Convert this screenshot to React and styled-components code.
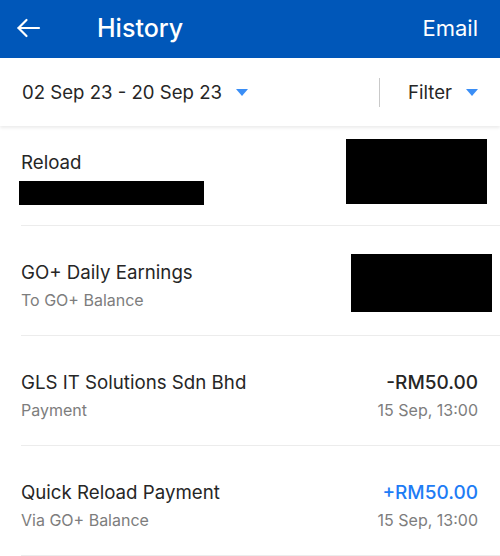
import React from "react";
import styled, { createGlobalStyle } from "styled-components";

const GlobalStyle = createGlobalStyle`
  body {
    margin: 0;
    background: #ffffff;
    font-family: Inter, "Noto Sans", sans-serif;
  }
  * {
    box-sizing: border-box;
  }
`;

const StyledPage = styled.div`
  width: 500px;
  height: 556px;
  overflow: hidden;
  background: #ffffff;
`;

const StyledHeader = styled.div`
  height: 58px;
  background: #0057b9;
  display: flex;
  align-items: center;
  padding: 0 22px 2px 14px;
  color: #ffffff;
`;

const StyledBack = styled.button`
  border: 0;
  background: transparent;
  padding: 0;
  width: 28px;
  height: 28px;
  display: flex;
  align-items: center;
  justify-content: center;
  color: #ffffff;
`;

const StyledTitle = styled.div`
  margin-left: 55px;
  font-size: 25px;
  font-weight: 500;
  flex: 1;
`;

const StyledEmail = styled.div`
  font-size: 22px;
  font-weight: 400;
`;

const StyledFilterBar = styled.div`
  height: 68px;
  display: flex;
  align-items: center;
  padding: 0 22px;
  box-shadow: 0 2px 3px rgba(0, 0, 0, 0.08);
  position: relative;
`;

const StyledDrop = styled.div`
  display: flex;
  align-items: center;
  gap: 14px;
  font-size: 18.6px;
  color: #262626;
  flex: ${(p) => (p.$grow ? 1 : "none")};
`;

const StyledCaret = styled.span`
  width: 0;
  height: 0;
  border-left: 6.5px solid transparent;
  border-right: 6.5px solid transparent;
  border-top: 7px solid #3a8ef6;
  margin-top: 1px;
`;

const StyledSep = styled.div`
  width: 1px;
  height: 29px;
  background: #c9c9c9;
  margin-right: 28px;
`;

const StyledList = styled.div`
  padding-left: 21px;
`;

const StyledRow = styled.div`
  height: ${(p) => (p.$first ? 100 : 110)}px;
  display: flex;
  align-items: ${(p) => (p.$first ? "flex-start" : "center")};
  justify-content: space-between;
  padding: ${(p) => (p.$first ? "0" : "10px")} 22px 0 0;
  border-bottom: 1.5px solid #ececec;
`;

const StyledTexts = styled.div`
  display: flex;
  flex-direction: column;
  gap: ${(p) => (p.$first ? 7 : 6)}px;
  margin-top: ${(p) => (p.$first ? 25 : 0)}px;
`;

const StyledName = styled.div`
  font-size: 18.7px;
  color: #262626;
`;

const StyledSub = styled.div`
  font-size: 16px;
  color: #7d7d7d;
`;

const StyledAmounts = styled.div`
  display: flex;
  flex-direction: column;
  align-items: flex-end;
  gap: 6px;
`;

const StyledAmount = styled.div`
  font-size: 19px;
  font-weight: 500;
  color: ${(p) => (p.$credit ? "#1e7cf5" : "#262626")};
`;

const StyledRedact = styled.div`
  background: #000000;
  width: ${(p) => p.$w}px;
  height: ${(p) => p.$h}px;
  margin-left: ${(p) => p.$ml || 0}px;
  margin-right: ${(p) => p.$mr || 0}px;
  margin-top: ${(p) => p.$mt || 0}px;
`;

const App = () => (
  <StyledPage>
    <GlobalStyle />
    <StyledHeader>
      <StyledBack>
        <svg width="26" height="22" viewBox="0 0 26 22" fill="none" stroke="#fff" strokeWidth="2.2" strokeLinecap="round" strokeLinejoin="round">
          <path d="M24 11H3.5" />
          <path d="M11.5 3L3.5 11l8 8" />
        </svg>
      </StyledBack>
      <StyledTitle>History</StyledTitle>
      <StyledEmail>Email</StyledEmail>
    </StyledHeader>
    <StyledFilterBar>
      <StyledDrop $grow>
        02 Sep 23 - 20 Sep 23
        <StyledCaret />
      </StyledDrop>
      <StyledSep />
      <StyledDrop>
        Filter
        <StyledCaret />
      </StyledDrop>
    </StyledFilterBar>
    <StyledList>
      <StyledRow $first>
        <StyledTexts $first>
          <StyledName>Reload</StyledName>
          <StyledRedact $w={185} $h={24} $ml={-2} />
        </StyledTexts>
        <StyledRedact $w={141} $h={65} $mt={13} $mr={-9} />
      </StyledRow>
      <StyledRow>
        <StyledTexts>
          <StyledName>GO+ Daily Earnings</StyledName>
          <StyledSub>To GO+ Balance</StyledSub>
        </StyledTexts>
        <StyledRedact $w={141} $h={58} $mr={-14} $mt={-6} />
      </StyledRow>
      <StyledRow>
        <StyledTexts>
          <StyledName>GLS IT Solutions Sdn Bhd</StyledName>
          <StyledSub>Payment</StyledSub>
        </StyledTexts>
        <StyledAmounts>
          <StyledAmount>-RM50.00</StyledAmount>
          <StyledSub>15 Sep, 13:00</StyledSub>
        </StyledAmounts>
      </StyledRow>
      <StyledRow>
        <StyledTexts>
          <StyledName>Quick Reload Payment</StyledName>
          <StyledSub>Via GO+ Balance</StyledSub>
        </StyledTexts>
        <StyledAmounts>
          <StyledAmount $credit>+RM50.00</StyledAmount>
          <StyledSub>15 Sep, 13:00</StyledSub>
        </StyledAmounts>
      </StyledRow>
    </StyledList>
  </StyledPage>
);

export default App;
